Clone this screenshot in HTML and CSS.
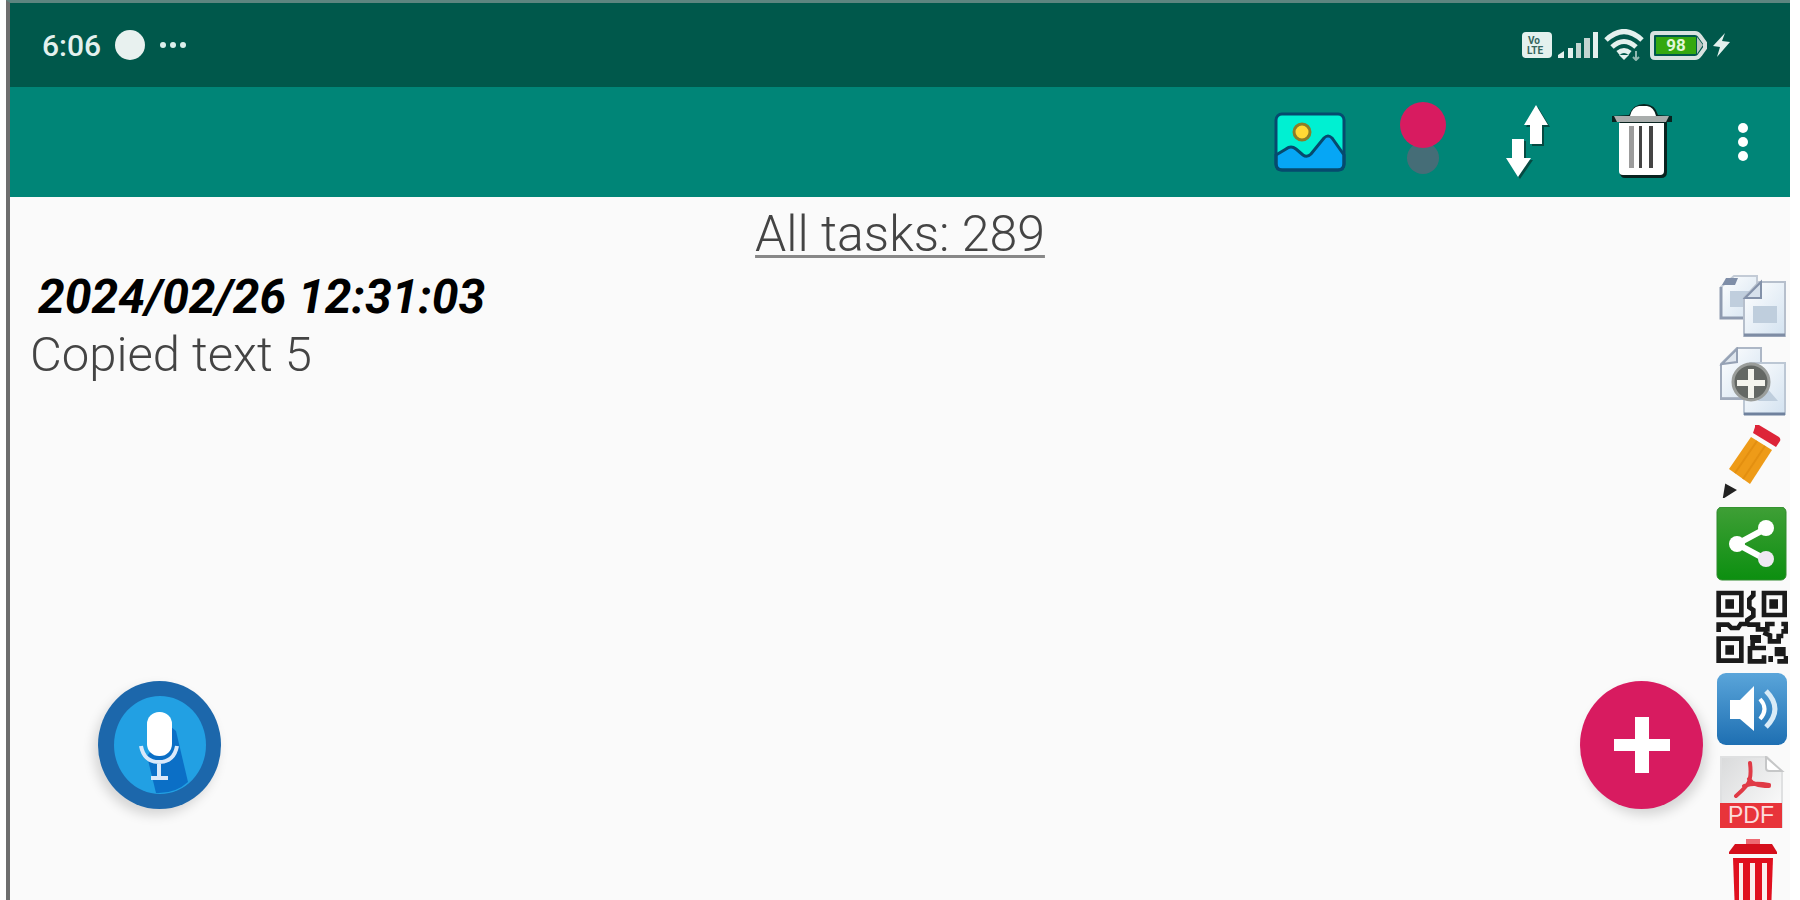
FILE: index.html
```html
<!DOCTYPE html>
<html lang="en">
  <head>
    <meta charset="UTF-8" />
    <meta name="viewport" content="width=device-width, initial-scale=1.0" />
    <title>Tasks</title>
    <link rel="stylesheet" href="styles.css">
  </head>
  <body>
    <div class="app">
      <div class="status-bar">
        <div class="status-left">
          <span class="clock">6:06</span>
          <span class="status-dot"></span>
          <svg width="28" height="8" viewBox="0 0 28 8" fill="#dcefeb">
            <circle cx="4" cy="4" r="3" />
            <circle cx="14" cy="4" r="3" />
            <circle cx="24" cy="4" r="3" />
          </svg>
        </div>
        <div class="status-right">
          <!-- VoLTE -->
          <svg width="30" height="26" viewBox="0 0 30 26">
            <rect width="30" height="26" rx="4" fill="#e4f1ee" />
            <text x="6" y="12" class="volte">Vo</text>
            <text x="5" y="22" class="volte">LTE</text>
          </svg>
          <!-- signal -->
          <svg width="40" height="26" viewBox="0 0 40 26" fill="#e4f1ee">
            <path d="M0 26v-3l6-4v7zM10 16h5v10h-5zM35 0h5v26h-5z" />
            <path d="M18 11h5v15h-5zM26 6h6v20h-6z" fill="#c3d5d1" />
          </svg>
          <!-- wifi -->
          <svg width="40" height="32" viewBox="0 0 40 32" fill="none" stroke="#e4f1ee" stroke-width="5">
            <path d="M2 11q18-17 36 0M8 18q12-11 24 0M14 24q6-5 12 0" />
            <path d="M15 26l5 5 5-5z" fill="#e4f1ee" stroke="none" />
            <path d="M32 22v9M29 28l3 3 3-3" stroke="#8fb8b0" stroke-width="2" />
          </svg>
          <!-- battery -->
          <svg width="57" height="29" viewBox="0 0 57 29">
            <path d="M5 2h40q3 0 5 3l5 7v5l-5 7q-2 3-5 3H5q-3 0-3-3V5q0-3 3-3z" fill="#00584b" stroke="#d9e2e0" stroke-width="4" />
            <path d="M47 6l6 8-6 9z" fill="#b9c4c1" />
            <rect x="6" y="6" width="40" height="17" fill="#35a810" />
            <text x="26" y="20" class="battery-level">98</text>
          </svg>
          <!-- charging -->
          <svg width="17" height="24" viewBox="0 0 17 24" fill="#e4f1ee">
            <path d="M12 0L0 13l7 1-3 10L17 9l-8-1z" />
          </svg>
        </div>
      </div>

      <div class="toolbar">
        <button type="button" class="icon-btn tool-picture" aria-label="Picture">
          <svg width="72" height="60" viewBox="0 0 72 60">
            <rect x="2" y="2" width="68" height="56" rx="6" fill="#00f0d2" />
            <path d="M2 43L12 37q5-4 10 0l7 6q4 3 8-1l13-16q4-4 8 0l12 17v9q0 6-6 6H8q-6 0-6-6z" fill="#06a6f5" stroke="#064a6e" stroke-width="3" />
            <rect x="2" y="2" width="68" height="56" rx="6" fill="none" stroke="#064a6e" stroke-width="3" />
            <circle cx="28" cy="20" r="8" fill="#ffd935" stroke="#8b7d28" stroke-width="3" />
          </svg>
        </button>
        <button type="button" class="icon-btn tool-record" aria-label="Color">
          <svg width="46" height="80" viewBox="0 0 46 80">
            <circle cx="23" cy="56" r="16" fill="#456d77" />
            <circle cx="23" cy="23" r="23" fill="#d81b60" />
          </svg>
        </button>
        <button type="button" class="icon-btn tool-sort" aria-label="Sort">
          <svg width="46" height="76" viewBox="0 0 46 76">
            <path d="M33 3L45 23h-6v19H27V23h-6zM9 37h12v19h7L15 75 3 56h6z" fill="#064a42" />
            <path d="M31 1L43 21h-6v19H25V21h-6zM7 35h12v19h7L13 73 1 54h6z" fill="#fff" />
          </svg>
        </button>
        <button type="button" class="icon-btn tool-delete" aria-label="Delete all">
          <svg width="64" height="76" viewBox="0 0 64 76">
            <path d="M18 11Q22 0 33 0t14 11l14 1v6h-5v50q0 6-6 6H14q-5 0-5-6V18H1v-6z" fill="#08231f" />
            <path d="M19 12q2-9 9-10h8q7 1 9 10z" fill="#fff" />
            <path d="M3 12h55l-3 6H6z" fill="#a9adac" />
            <path d="M8 19h45v48q0 4-4 4H12q-4 0-4-4z" fill="#fff" />
            <path d="M18 22h5v42h-5z" fill="#9c9c9c" />
            <path d="M28 22h3v42h-3zM38 22h4v42h-4z" fill="#444" />
          </svg>
        </button>
        <button type="button" class="icon-btn" aria-label="More options">
          <svg width="12" height="40" viewBox="0 0 12 40" fill="#fff">
            <circle cx="6" cy="6" r="5" />
            <circle cx="6" cy="20" r="5" />
            <circle cx="6" cy="34" r="5" />
          </svg>
        </button>
      </div>

      <main class="content">
        <h1 class="title">All tasks: 289</h1>
        <div class="task">
          <div class="task-body">
            <div class="task-date">2024/02/26 12:31:03</div>
            <div class="task-text">Copied text 5</div>
          </div>
          <div class="task-actions">
            <button type="button" class="icon-btn" aria-label="Copy">
              <svg width="72" height="65" viewBox="0 0 72 65">
                <defs>
                  <linearGradient id="paper" x1="0" y1="0" x2="1" y2="1">
                    <stop offset="0" stop-color="#ffffff" />
                    <stop offset="1" stop-color="#d3e2f0" />
                  </linearGradient>
                </defs>
                <path d="M18 3h23v42H5V14z" fill="url(#paper)" stroke="#c3cbd6" stroke-width="2" />
                <path d="M5 14v31h24" fill="none" stroke="#8f9bb0" stroke-width="3" />
                <path d="M6 12L10 5h12l-3 7z" fill="#7f8ea8" />
                <path d="M14 18h20v16H14z" fill="#c0cedd" />
                <path d="M43 9h26v54H28V25z" fill="url(#paper)" stroke="#b6bfcc" stroke-width="2" />
                <path d="M28 62h41" stroke="#7e8ca4" stroke-width="3" />
                <path d="M29 25L45 9v16z" fill="#d7e1ec" stroke="#8391a9" stroke-width="2" />
                <path d="M37 33h24v17H37z" fill="#bfcedd" />
              </svg>
            </button>
            <button type="button" class="icon-btn" aria-label="Copy and add">
              <svg width="72" height="69" viewBox="0 0 72 69">
                <path d="M21 1h24v50H5V17z" fill="url(#paper)" stroke="#adb7c6" stroke-width="2" />
                <path d="M5 17v35h24" fill="none" stroke="#a0abbc" stroke-width="2" />
                <path d="M6 17L21 2v13z" fill="#dfe6ee" stroke="#95a1b4" stroke-width="2" />
                <path d="M34 16h35v51H28V24z" fill="url(#paper)" stroke="#bcc7d4" stroke-width="2" />
                <path d="M28 67h41" stroke="#6f819d" stroke-width="3" />
                <path d="M50 40l12 14H42z" fill="#bfcedd" />
                <circle cx="35" cy="35" r="18" fill="#646864" stroke="#9a9d9a" stroke-width="3" />
                <path d="M35 22v29M21 36h28" stroke="#f5f5ee" stroke-width="6" />
              </svg>
            </button>
            <button type="button" class="icon-btn" aria-label="Edit">
              <svg width="72" height="73" viewBox="0 0 72 73">
                <path d="M39 0h4l20 12q2 2 1 4l-4 6-23-14 2-6z" fill="#dd2438" />
                <path d="M35 12L56 25 34 59 13 44z" fill="#ee9b18" />
                <path d="M41 16L19 48M49 21L27 54" stroke="#e38f10" stroke-width="2" />
                <path d="M10 60l9 5L8 72z" fill="#222" stroke="#222" stroke-width="2" />
              </svg>
            </button>
            <button type="button" class="icon-btn" aria-label="Share">
              <svg width="72" height="74" viewBox="0 0 72 74">
                <defs>
                  <linearGradient id="green" x1="0" y1="0" x2="0" y2="1">
                    <stop offset="0" stop-color="#3f9f36" />
                    <stop offset="1" stop-color="#0c8f10" />
                  </linearGradient>
                </defs>
                <rect x="1" y="0" width="69" height="73" rx="5" fill="url(#green)" stroke="#2f8a2c" />
                <path d="M49 22L21 37l28 15" fill="none" stroke="#fff" stroke-width="6" />
                <circle cx="50" cy="21" r="8" fill="#fff" />
                <circle cx="21" cy="37" r="8" fill="#fff" />
                <circle cx="50" cy="52" r="8" fill="#efe9f2" />
              </svg>
            </button>
            <button type="button" class="icon-btn" aria-label="QR code">
              <svg width="72" height="74" viewBox="0 0 216 222" fill="none" stroke="#1a1a1a" stroke-width="14">
                <path d="M8 9h68v66H8zM144 9h62v66h-62zM8 146h68v66H8z" />
                <path d="M28 28h26v28H28zM160 28h26v28h-26zM28 166h26v28H28z" fill="#1a1a1a" stroke="none" />
                <path d="M112 2v14l-12 12v24l12 8v18l-18 12v12H74l-8 12H46l-10-10H8v22" />
                <path d="M94 104h32v14h28v-16h22M196 102h14v22h-14M142 128l20 8v18h26v-16h14M102 142h26v10h-18v22h40M102 168v46h42v-18M176 178h26v14h-26M164 198v18M184 214h26v-16" />
              </svg>
            </button>
            <button type="button" class="icon-btn" aria-label="Read aloud">
              <svg width="72" height="74" viewBox="0 0 72 74">
                <defs>
                  <linearGradient id="blue" x1="0" y1="0" x2="0" y2="1">
                    <stop offset="0" stop-color="#5aa5da" />
                    <stop offset="1" stop-color="#1e6fb2" />
                  </linearGradient>
                </defs>
                <rect x="1" y="0" width="70" height="72" rx="9" fill="url(#blue)" />
                <path d="M14 27h10l14-14v45L24 46H14z" fill="#fff" />
                <path d="M44 26q9 10 0 20" fill="none" stroke="#fff" stroke-width="4" />
                <path d="M50 18q18 18 0 36" fill="none" stroke="#d9ebf7" stroke-width="5" />
              </svg>
            </button>
            <button type="button" class="icon-btn" aria-label="Export PDF">
              <svg width="72" height="74" viewBox="0 0 72 74">
                <defs>
                  <linearGradient id="sheet" x1="0" y1="0" x2="1" y2="1">
                    <stop offset="0" stop-color="#d9dadb" />
                    <stop offset="1" stop-color="#ffffff" />
                  </linearGradient>
                </defs>
                <path d="M5 1h46l15 15v55H5z" fill="url(#sheet)" stroke="#dfe0e1" stroke-width="2" />
                <path d="M50 1v11q0 3 3 3h13z" fill="#fff" stroke="#c6c7c8" stroke-width="2" />
                <path d="M34 7q2 16-3 22T20 40M33 23q4 7 20 7M28 30q10-4 25-1" fill="none" stroke="#e03a46" stroke-width="4" stroke-linecap="round" />
                <rect x="4" y="47" width="62" height="25" fill="#e8343a" />
                <text x="35" y="67" class="pdf-label">PDF</text>
              </svg>
            </button>
            <button type="button" class="icon-btn" aria-label="Delete">
              <svg width="72" height="74" viewBox="0 0 72 74">
                <path d="M30 0h14v5H30z" fill="#ee6a72" />
                <path d="M19 5h37l5 8v2H13v-2z" fill="#d50f1c" />
                <path d="M17 19h40l-2 55H19z" fill="#e0101f" />
                <path d="M23 24h4v46h-4zM34 24h5v46h-5zM46 24h5v46h-5z" fill="#fbeeee" />
              </svg>
            </button>
          </div>
        </div>
      </main>

      <button type="button" class="fab fab-voice" aria-label="Voice input">
        <svg width="94" height="98" viewBox="0 0 94 98">
          <ellipse cx="47" cy="49" rx="46" ry="49" fill="#22a0e3" />
          <path d="M57 30l6 5 12 51Q62 98 43 97L34 60z" fill="#0b6fc6" />
          <rect x="34" y="16" width="25" height="44" rx="12" fill="#fff" />
          <path d="M28 50q3 16 18 16t18-16M46 66v16M38 82h17" fill="none" stroke="#dbe9fa" stroke-width="4" />
        </svg>
      </button>
      <button type="button" class="fab fab-add" aria-label="Add task">
        <svg width="56" height="56" viewBox="0 0 56 56" fill="#fff">
          <path d="M21 0h14v22h21v12H35v22H21V34H0V22h21z" />
        </svg>
      </button>
    </div>
  </body>
</html>
```

FILE: styles.css
```css
* {
  box-sizing: border-box;
}
body {
  margin: 0;
  padding: 0 10px 0 6px;
  background-color: #fff;
  font-family: Roboto, sans-serif;
}
.app {
  position: relative;
  height: 100vh;
  overflow: hidden;
  border-top: 3px solid #5d857f;
  border-left: 4px solid #6e6e6e;
  background-color: #fafafa;
}
.status-bar {
  display: flex;
  justify-content: space-between;
  align-items: center;
  height: 84px;
  padding: 0 60px 0 32px;
  background-color: #00584b;
}
.status-left {
  display: flex;
  align-items: center;
  gap: 14px;
}
.clock {
  font-size: 30px;
  font-weight: 500;
  color: #e4f1ee;
}
.status-dot {
  width: 30px;
  height: 30px;
  border-radius: 50%;
  background-color: #e8f1ef;
}
.status-right {
  display: flex;
  align-items: center;
  gap: 6px;
}
.volte {
  font-size: 10px;
  font-weight: 700;
  fill: #35665e;
}
.battery-level {
  font-size: 17px;
  font-weight: 700;
  fill: #e2f7d8;
  text-anchor: middle;
}
.toolbar {
  display: flex;
  justify-content: flex-end;
  align-items: center;
  height: 110px;
  padding-right: 41px;
  background-color: #008577;
}
.icon-btn {
  display: block;
  padding: 0;
  border: none;
  background: none;
  cursor: pointer;
}
.icon-btn svg,
.fab svg {
  display: block;
}
.tool-picture {
  margin-right: 54px;
}
.tool-record {
  margin-right: 59px;
}
.tool-sort {
  margin-right: 60px;
}
.tool-delete {
  margin-right: 62px;
}
.content {
  padding-top: 8px;
}
.title {
  margin: 0 0 5px;
  font-size: 50px;
  font-weight: 300;
  line-height: 58px;
  text-align: center;
  text-decoration: underline #888;
  text-decoration-thickness: 3px;
  text-underline-offset: 4px;
  text-decoration-skip-ink: none;
  color: #444;
}
.task {
  display: flex;
  justify-content: space-between;
  padding: 0 2px 0 20px;
}
.task-date {
  padding-left: 8px;
  font-size: 48px;
  font-style: italic;
  font-weight: 700;
  line-height: 58px;
  color: #000;
}
.task-text {
  font-size: 49px;
  font-weight: 300;
  line-height: 58px;
  color: #444;
}
.task-actions {
  display: flex;
  flex-direction: column;
  gap: 9px;
  padding-top: 5px;
}
.pdf-label {
  font-size: 23px;
  font-weight: 500;
  fill: #fbdcdc;
  text-anchor: middle;
}
.fab {
  position: absolute;
  bottom: 91px;
  display: flex;
  justify-content: center;
  align-items: center;
  width: 123px;
  height: 128px;
  padding: 0;
  border: none;
  border-radius: 50%;
  cursor: pointer;
}
.fab-voice {
  left: 88px;
  background-color: #1c67ab;
  box-shadow: -4px 6px 12px rgba(0, 0, 0, 0.15);
}
.fab-add {
  right: 87px;
  background-color: #d81b60;
  box-shadow: 4px 6px 12px rgba(0, 0, 0, 0.15);
}
```
